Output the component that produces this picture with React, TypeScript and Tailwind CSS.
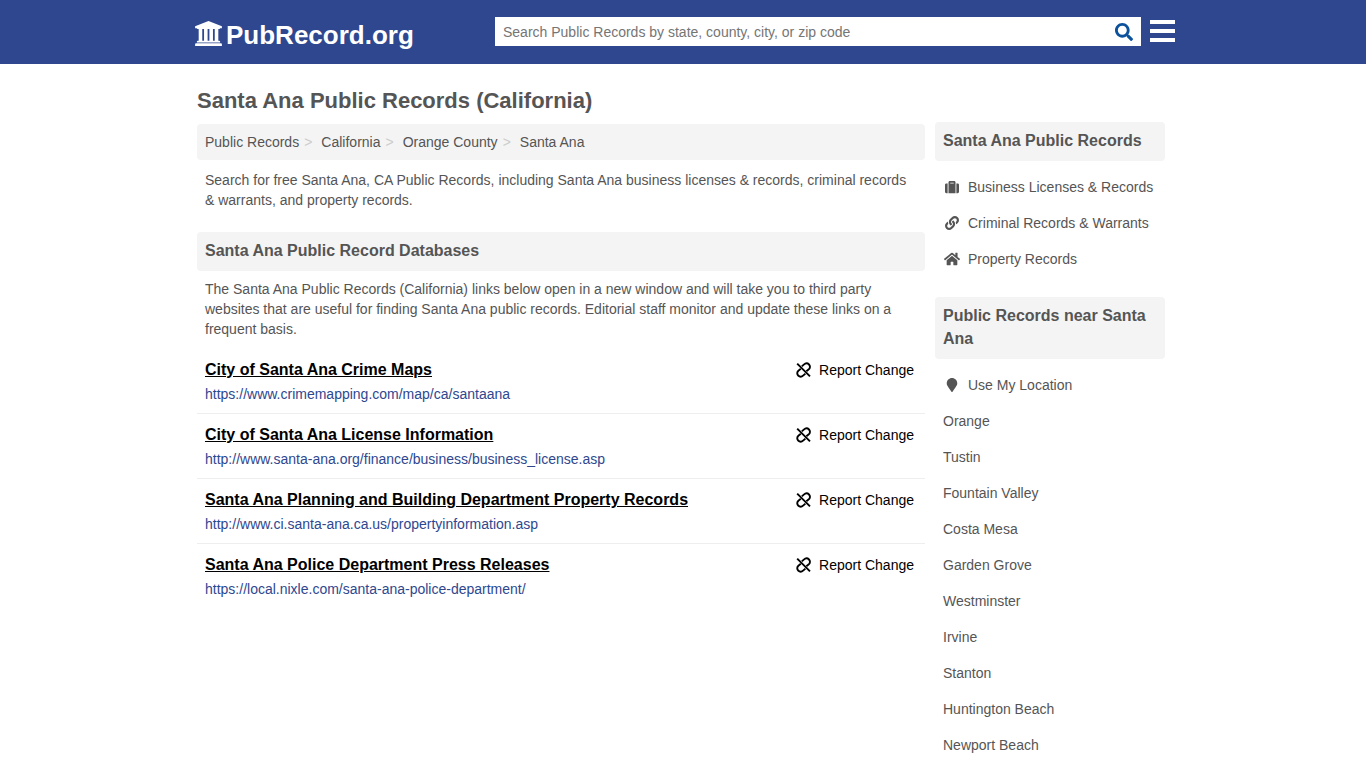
import React from "react";
import { IconType } from "react-icons";
import { FaSearch, FaSuitcase, FaLink, FaHome, FaMapMarker } from "react-icons/fa";

interface Resource {
  title: string;
  url: string;
}

interface Category {
  label: string;
  icon: IconType;
  size: number;
}

const breadcrumbs = ["Public Records", "California", "Orange County", "Santa Ana"];

const resources: Resource[] = [
  { title: "City of Santa Ana Crime Maps", url: "https://www.crimemapping.com/map/ca/santaana" },
  { title: "City of Santa Ana License Information", url: "http://www.santa-ana.org/finance/business/business_license.asp" },
  { title: "Santa Ana Planning and Building Department Property Records", url: "http://www.ci.santa-ana.ca.us/propertyinformation.asp" },
  { title: "Santa Ana Police Department Press Releases", url: "https://local.nixle.com/santa-ana-police-department/" },
];

const categories: Category[] = [
  { label: "Business Licenses & Records", icon: FaSuitcase, size: 14 },
  { label: "Criminal Records & Warrants", icon: FaLink, size: 14 },
  { label: "Property Records", icon: FaHome, size: 16 },
];

const nearby = [
  "Orange",
  "Tustin",
  "Fountain Valley",
  "Costa Mesa",
  "Garden Grove",
  "Westminster",
  "Irvine",
  "Stanton",
  "Huntington Beach",
  "Newport Beach",
];

// Government building with four columns
const BuildingIcon = () => (
  <svg width="27" height="25" viewBox="0 0 1920 1792" className="mb-1" fill="currentColor" aria-hidden="true">
    <path d="M960 0l960 384v128h-128q0 26-20.5 45t-48.5 19h-1526q-28 0-48.5-19t-20.5-45h-128v-128zM256 560h256v848h128v-848h256v848h128v-848h256v848h128v-848h256v848h59q28 0 48.5 19t20.5 45v64h-1664v-64q0-26 20.5-45t48.5-19h59v-848zM1851 1600q28 0 48.5 19t20.5 45v128h-1920v-128q0-26 20.5-45t48.5-19h1782z" />
  </svg>
);

// Chain link crossed out by a diagonal
const BrokenLinkIcon = () => (
  <svg width="16" height="16" viewBox="0 0 16 16" fill="none" stroke="currentColor" strokeWidth="1.9" aria-hidden="true">
    <path d="M2.2 1.6 15 14.4" />
    <path d="M6.8 4.4 8.8 2.6C10.4 1.2 12.7 1.2 14 2.5C15.4 4 15.2 6.1 13.8 7.3L11.4 9.2" />
    <path d="M10.4 11.6 8.4 13.4C6.8 14.8 4.5 14.8 3.2 13.5C1.8 12 2 9.9 3.4 8.7L5.8 6.8" />
  </svg>
);

const Header = () => (
  <header className="bg-[#2e478f]">
    <div className="mx-auto flex h-16 w-full max-w-[984px] items-center pb-[2px] pl-1">
      <a href="#" className="flex w-[300px] shrink-0 items-center gap-1 pt-2 text-[26px] font-bold text-white">
        <BuildingIcon />
        PubRecord.org
      </a>
      <form className="flex h-[29px] grow bg-white" onSubmit={(e) => e.preventDefault()}>
        <input
          type="text"
          aria-label="Search Public Records"
          placeholder="Search Public Records by state, county, city, or zip code"
          className="min-w-0 grow px-2 pt-px text-sm text-[#555] outline-none placeholder:text-[#757575]"
        />
        <button type="submit" aria-label="Search" className="px-2 pt-px text-[#0b519c]">
          <FaSearch size={18} />
        </button>
      </form>
      <button type="button" aria-label="Menu" className="ml-2 flex w-[26px] shrink-0 flex-col gap-[5px] pl-px">
        <span className="h-1 w-full bg-white" />
        <span className="h-1 w-full bg-white" />
        <span className="h-1 w-full bg-white" />
      </button>
    </div>
  </header>
);

const Breadcrumbs = () => (
  <nav aria-label="Breadcrumb" className="rounded-sm bg-[#f4f4f4] px-2 py-2">
    <ol className="flex">
      {breadcrumbs.map((crumb, index) => (
        <li key={crumb} className="flex">
          <a href="#">{crumb}</a>
          {index < breadcrumbs.length - 1 && <span className="ml-[5px] mr-[9px] text-[#ccc]">&gt;</span>}
        </li>
      ))}
    </ol>
  </nav>
);

const SectionTitle = ({ children }: { children: React.ReactNode }) => (
  <h2 className="rounded-sm bg-[#f4f4f4] px-2 pt-[7px] pb-[9px] text-base leading-[23px] font-bold">{children}</h2>
);

const ResourceRow = ({ title, url }: Resource) => (
  <li className="flex items-start justify-between border-b border-[#eee] px-2 pt-[9px] pb-[9px] last:border-b-0">
    <div>
      <h3 className="text-base leading-6 font-bold text-black">
        <a href={url} className="underline">{title}</a>
      </h3>
      <p className="pt-[2px] text-[#2e478f]">{url}</p>
    </div>
    <button type="button" className="mr-[3px] flex shrink-0 items-center gap-2 pt-[2px] text-black">
      <BrokenLinkIcon />
      Report Change
    </button>
  </li>
);

const Sidebar = () => (
  <aside className="w-[230px] shrink-0 pt-[58px]">
    <SectionTitle>Santa Ana Public Records</SectionTitle>
    <ul className="px-2 pt-2 pb-5">
      {categories.map(({ label, icon: Icon, size }) => (
        <li key={label} className="py-2">
          <a href="#" className="flex items-center">
            <span className="mr-[7px] flex w-[18px] justify-center">
              <Icon size={size} />
            </span>
            {label}
          </a>
        </li>
      ))}
    </ul>
    <SectionTitle>Public Records near Santa Ana</SectionTitle>
    <ul className="px-2 pt-2">
      <li className="py-2">
        <button type="button" className="flex items-center">
          <span className="mr-[7px] flex w-[18px] justify-center">
            <FaMapMarker size={14} />
          </span>
          Use My Location
        </button>
      </li>
      {nearby.map((city) => (
        <li key={city} className="py-2">
          <a href="#">{city}</a>
        </li>
      ))}
    </ul>
  </aside>
);

const App = () => {
  return (
    <div className="bg-white font-['Liberation_Sans',Arial,sans-serif] text-sm leading-5 text-[#555]">
      <Header />
      <div className="mx-auto flex w-full max-w-[980px] gap-[10px] pl-1 pr-2">
        <main className="min-w-0 grow">
          <h1 className="pt-[23px] pb-[9px] text-[22px] leading-7 font-bold">Santa Ana Public Records (California)</h1>
          <Breadcrumbs />
          <p className="px-2 pt-[10px] pb-[22px]">
            Search for free Santa Ana, CA Public Records, including Santa Ana business licenses &amp; records, criminal
            records &amp; warrants, and property records.
          </p>
          <SectionTitle>Santa Ana Public Record Databases</SectionTitle>
          <p className="px-2 pt-2 pb-[10px]">
            The Santa Ana Public Records (California) links below open in a new window and will take you to third party
            websites that are useful for finding Santa Ana public records. Editorial staff monitor and update these links
            on a frequent basis.
          </p>
          <ul>
            {resources.map((resource) => (
              <ResourceRow key={resource.title} {...resource} />
            ))}
          </ul>
        </main>
        <Sidebar />
      </div>
    </div>
  );
};

export default App;
